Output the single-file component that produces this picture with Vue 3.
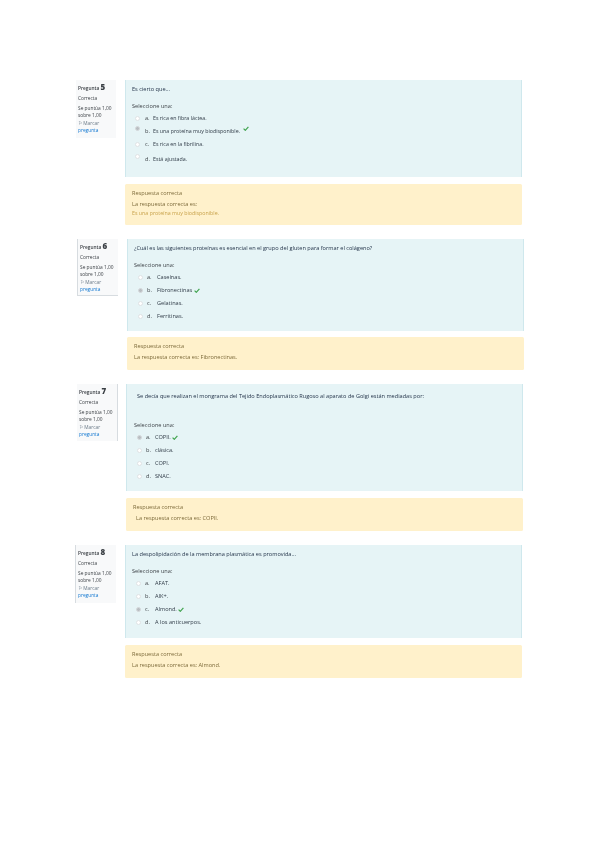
<script setup>
const questions = [
  {
    id: 'q5', n: 5, score: ['Se puntúa 1,00', 'sobre 1,00'],
    text: 'Es cierto que...',
    options: [
      { l: 'a.', t: 'Es rica en fibra láctea.' },
      { l: 'b.', t: 'Es una proteína muy biodisponible.', ok: true },
      { l: 'c.', t: 'Es rica en la fibrilina.' },
      { l: 'd.', t: 'Está ajustada.' }
    ],
    feedback: ['La respuesta correcta es:', 'Es una proteína muy biodisponible.']
  },
  {
    id: 'q6', n: 6, score: ['Se puntúa 1,00', 'sobre 1,00'],
    text: '¿Cuál es las siguientes proteínas es esencial en el grupo del gluten para formar el colágeno?',
    options: [
      { l: 'a.', t: 'Caseínas.' },
      { l: 'b.', t: 'Fibronectinas', ok: true },
      { l: 'c.', t: 'Gelatinas.' },
      { l: 'd.', t: 'Ferritinas.' }
    ],
    feedback: ['La respuesta correcta es: Fibronectinas.']
  },
  {
    id: 'q7', n: 7, score: ['Se puntúa 1,00', 'sobre 1,00'],
    text: 'Se decía que realizan el mongrama del Tejido Endoplasmático Rugoso al aparato de Golgi están mediadas por:',
    options: [
      { l: 'a.', t: 'COPII.', ok: true },
      { l: 'b.', t: 'clásica.' },
      { l: 'c.', t: 'COPI.' },
      { l: 'd.', t: 'SNAC.' }
    ],
    feedback: ['La respuesta correcta es: COPII.']
  },
  {
    id: 'q8', n: 8, score: ['Se puntúa 1,00', 'sobre 1,00'],
    text: 'La despolipidación de la membrana plasmática es promovida...',
    options: [
      { l: 'a.', t: 'AFAT.' },
      { l: 'b.', t: 'AIK+.' },
      { l: 'c.', t: 'Almond.', ok: true },
      { l: 'd.', t: 'A los anticuerpos.' }
    ],
    feedback: ['La respuesta correcta es: Almond.']
  }
]
</script>

<template>
  <div class="page">
    <section v-for="q in questions" :key="q.id" class="question" :class="q.id">
      <aside class="side">
        <div class="title">Pregunta <b>{{ q.n }}</b></div>
        <div class="state">Correcta</div>
        <div class="score">{{ q.score[0] }}<br />{{ q.score[1] }}</div>
        <div class="flag"><span class="flag-icon">⚐</span> Marcar<br /><span class="link">pregunta</span></div>
      </aside>
      <div class="main">
        <div class="formulation">
          <p class="qtext">{{ q.text }}</p>
          <p class="prompt">Seleccione una:</p>
          <div v-for="o in q.options" :key="o.l" class="row">
            <span class="radio" :class="{ on: o.ok }"></span>
            <span class="letter">{{ o.l }}</span>
            <span class="answer">{{ o.t }}</span>
            <svg v-if="o.ok" class="check" viewBox="0 0 10 8" aria-hidden="true">
              <path d="M1 4.2 L3.8 7 L9 1.2" fill="none" stroke="#3fa34d" stroke-width="2" />
            </svg>
          </div>
        </div>
        <div class="outcome">
          <p class="head">Respuesta correcta</p>
          <p v-for="line in q.feedback" :key="line" class="fb">{{ line }}</p>
        </div>
      </div>
    </section>
  </div>
</template>

<style>
html, body { background: #fff; }
</style>

<style scoped>
.page {
  width: 600px;
  height: 848px;
  overflow: hidden;
  padding-top: 80px;
  box-sizing: border-box;
  font-family: "Open Sans", "Liberation Sans", sans-serif;
  font-size: 5.6px;
  color: #3a3f44;
  filter: blur(0.5px);
}
p { margin: 0; }
.question { display: flex; align-items: flex-start; }
.side {
  box-sizing: border-box;
  width: 41px;
  padding: 3px 2px 0;
  background: #f8f9fa;
  font-size: 4.8px;
  line-height: 7.5px;
  white-space: nowrap;
}
.title { line-height: 7px; font-weight: 600; }
.title b { font-size: 8px; }
.state { margin-top: 3px; }
.score { margin-top: 2px; }
.flag { margin-top: 0; color: #6b7a88; }
.flag-icon { font-size: 4.5px; }
.link { color: #1177d1; }
.main { width: 397px; margin-left: 9px; }
.formulation {
  box-sizing: border-box;
  background: #e6f4f6;
  border-right: 1px solid #cfe8ed;
  border-left: 1px solid #cfe8ed;
  padding: 5px 6px 0;
}
.qtext { line-height: 8px; color: #24344a; }
.prompt { line-height: 8px; margin-top: 9px; margin-bottom: 1.5px; }
.row { display: flex; align-items: center; height: 13px; padding-left: 4px; }
.radio {
  box-sizing: border-box;
  width: 5px;
  height: 5px;
  border: 1px solid #dfe3e5;
  border-radius: 50%;
  background: #fff;
}
.radio.on { background: #b9bec2; border-color: #d5d9db; }
.letter { width: 9px; margin-left: 4px; }
.answer { color: #2f3a46; }
.check { width: 6px; height: 5px; margin-left: 1.5px; }
.outcome {
  box-sizing: border-box;
  margin-top: 7px;
  background: #fff1cb;
  border-radius: 1.5px;
  padding: 5px 7px 0;
  color: #7c6a3a;
}
.head { line-height: 8px; }
.fb { line-height: 9px; }
.head + .fb { margin-top: 3px; }

.q5 { margin-left: 76px; }
.q5 .side { width: 40px; height: 58px; }
.q5 .formulation { height: 97px; }
.q5 .outcome { height: 41px; }
.q5 .row { padding-left: 3px; }
.q5 .letter { width: 8px; margin-left: 5px; }
.q5 .answer { font-size: 5.3px; }
.q5 .row:nth-of-type(2) .radio { transform: translateY(-3px); }
.q5 .row:nth-of-type(2) .check { transform: translateY(-3px); margin-left: 3px; }
.q5 .row:nth-of-type(4) { margin-top: 2px; }
.q5 .row:nth-of-type(5) { margin-top: 1px; }
.q5 .row:nth-of-type(6) { margin-top: 3px; }
.q5 .row:nth-of-type(4) .radio { transform: translateY(-3px); }
.q5 .row:nth-of-type(6) .radio { transform: translateY(-4px); }
.q5 .outcome .fb:last-child { color: #c8a24a; font-size: 5.3px; }

.q6 { margin: 14px 0 0 77px; }
.q6 .side { height: 57px; border-left: 1px solid #d7dce0; border-bottom: 1px solid #d7dce0; }
.q6 .letter { width: 10px; }
.q6 .formulation { height: 92px; }
.q6 .outcome { height: 33px; margin-top: 6px; }

.q7 { margin: 14px 0 0 77px; }
.q7 .side { height: 57px; border-right: 1px solid #d7dce0; }
.q7 .main { margin-left: 8px; width: 397px; }
.q7 .formulation { height: 107px; padding-top: 8px; padding-left: 7px; }
.q7 .row { padding-left: 3px; }
.q7 .qtext { padding-left: 3px; }
.q7 .prompt { margin-top: 21px; }
.q7 .outcome { height: 33px; }
.q7 .fb { padding-left: 3px; }

.q8 { margin: 14px 0 0 75px; }
.q8 .side { height: 58px; border-left: 1px solid #d7dce0; }
.q8 .letter { width: 10px; }
.q8 .formulation { height: 93px; }
.q8 .outcome { height: 33px; }
</style>
